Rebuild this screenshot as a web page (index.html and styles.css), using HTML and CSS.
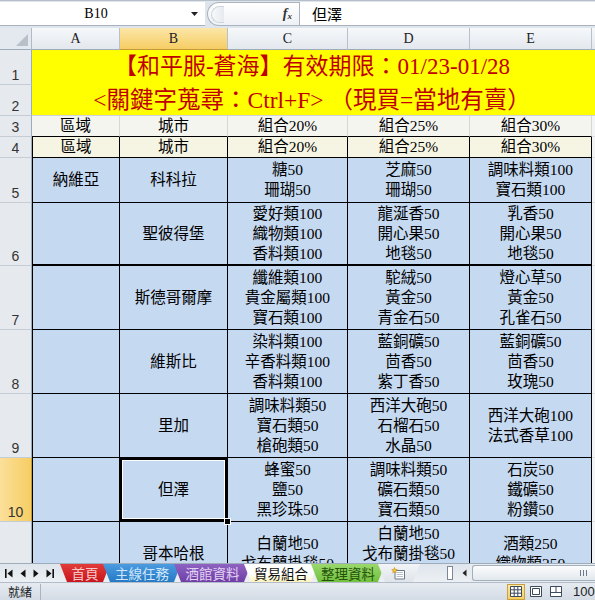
FILE: index.html
```html
<!DOCTYPE html>
<html lang="zh-Hant">
<head>
<meta charset="utf-8">
<title>貿易組合</title>
<link rel="stylesheet" href="styles.css">
</head>
<body>
<div class="app">
  <div class="fbar">
    <div class="namebox"><span class="ref">B10</span><span class="dd"><svg width="7" height="4" viewBox="0 0 7 4"><path d="M0 0H7L3.5 4Z" fill="#222"/></svg></span></div>
    <div class="fxzone"><span class="grip"></span><span class="fx">f<sub>x</sub></span></div>
    <div class="finput">但澤</div>
  </div>

  <div class="sheet">
    <div class="grid">
      <div class="corner"><svg width="12" height="12" viewBox="0 0 12 12"><path d="M12 0V12H0Z" fill="#b9c0c9"/></svg></div>
      <div class="ch">A</div>
      <div class="ch chsel">B</div>
      <div class="ch">C</div>
      <div class="ch">D</div>
      <div class="ch">E</div>
      <div class="ch chfill"></div>

      <div class="rh">1</div>
      <div class="title t1">【和平服-蒼海】有效期限：01/23-01/28</div>
      <div class="rh">2</div>
      <div class="title t2">&lt;關鍵字蒐尋：Ctrl+F&gt; （現買=當地有賣）</div>

      <div class="rh">3</div>
      <div class="h3">區域</div><div class="h3">城市</div><div class="h3">組合20%</div><div class="h3">組合25%</div><div class="h3">組合30%</div><div class="fill"></div>

      <div class="rh">4</div>
      <div class="h4 ca">區域</div><div class="h4">城市</div><div class="h4">組合20%</div><div class="h4">組合25%</div><div class="h4">組合30%</div><div class="fill"></div>

      <div class="rh">5</div>
      <div class="c ca">納維亞</div><div class="c">科科拉</div>
      <div class="c"><span>糖50</span><span>珊瑚50</span></div>
      <div class="c"><span>芝麻50</span><span>珊瑚50</span></div>
      <div class="c"><span>調味料類100</span><span>寶石類100</span></div>
      <div class="fill"></div>

      <div class="rh">6</div>
      <div class="c ca thick"></div><div class="c thick">聖彼得堡</div>
      <div class="c thick"><span>愛好類100</span><span>織物類100</span><span>香料類100</span></div>
      <div class="c thick"><span>龍涎香50</span><span>開心果50</span><span>地毯50</span></div>
      <div class="c thick"><span>乳香50</span><span>開心果50</span><span>地毯50</span></div>
      <div class="fill"></div>

      <div class="rh">7</div>
      <div class="c ca"></div><div class="c">斯德哥爾摩</div>
      <div class="c"><span>纖維類100</span><span>貴金屬類100</span><span>寶石類100</span></div>
      <div class="c"><span>駝絨50</span><span>黃金50</span><span>青金石50</span></div>
      <div class="c"><span>燈心草50</span><span>黃金50</span><span>孔雀石50</span></div>
      <div class="fill"></div>

      <div class="rh">8</div>
      <div class="c ca"></div><div class="c">維斯比</div>
      <div class="c"><span>染料類100</span><span>辛香料類100</span><span>香料類100</span></div>
      <div class="c"><span>藍銅礦50</span><span>茴香50</span><span>紫丁香50</span></div>
      <div class="c"><span>藍銅礦50</span><span>茴香50</span><span>玫瑰50</span></div>
      <div class="fill"></div>

      <div class="rh">9</div>
      <div class="c ca"></div><div class="c">里加</div>
      <div class="c"><span>調味料類50</span><span>寶石類50</span><span>槍砲類50</span></div>
      <div class="c"><span>西洋大砲50</span><span>石榴石50</span><span>水晶50</span></div>
      <div class="c"><span>西洋大砲100</span><span>法式香草100</span></div>
      <div class="fill"></div>

      <div class="rh rhsel">10</div>
      <div class="c ca"></div><div class="c sel">但澤<i class="handle"></i></div>
      <div class="c"><span>蜂蜜50</span><span>鹽50</span><span>黑珍珠50</span></div>
      <div class="c"><span>調味料類50</span><span>礦石類50</span><span>寶石類50</span></div>
      <div class="c"><span>石炭50</span><span>鐵礦50</span><span>粉鑽50</span></div>
      <div class="fill"></div>

      <div class="rh">11</div>
      <div class="c ca"></div><div class="c">哥本哈根</div>
      <div class="c"><span>白蘭地50</span><span>戈布蘭掛毯50</span></div>
      <div class="c up"><span>白蘭地50</span><span>戈布蘭掛毯50</span></div>
      <div class="c"><span>酒類250</span><span>織物類250</span></div>
      <div class="fill"></div>
    </div>
  </div>

  <div class="tabbar">
    <div class="nav">
      <svg width="8" height="9" viewBox="0 0 8 9"><rect x="0" y="0" width="1.6" height="9" fill="#111"/><path d="M7.5 0.5L2.5 4.5L7.5 8.5Z" fill="#111"/></svg>
      <svg width="6" height="9" viewBox="0 0 6 9"><path d="M5.5 0.5L0.5 4.5L5.5 8.5Z" fill="#111"/></svg>
      <svg width="6" height="9" viewBox="0 0 6 9"><path d="M0.5 0.5L5.5 4.5L0.5 8.5Z" fill="#111"/></svg>
      <svg width="8" height="9" viewBox="0 0 8 9"><path d="M0.5 0.5L5.5 4.5L0.5 8.5Z" fill="#111"/><rect x="6.4" y="0" width="1.6" height="9" fill="#111"/></svg>
    </div>
    <div class="tabs">
      <div class="tab red">首頁</div>
      <div class="tab blue">主線任務</div>
      <div class="tab purple">酒館資料</div>
      <div class="tab active">貿易組合</div>
      <div class="tab green">整理資料</div>
      <div class="tab newtab"><svg width="16" height="13" viewBox="0 0 16 13"><path d="M4 3.5H13.5V12H4Z" fill="#fff" stroke="#6b7684"/><path d="M5.5 5.5H12M5.5 7.5H12M5.5 9.5H12" stroke="#b8c2ce"/><path d="M3.5 0.5L4.3 2.4L6.3 2.6L4.8 3.9L5.2 5.8L3.5 4.8L1.8 5.8L2.2 3.9L0.7 2.6L2.7 2.4Z" fill="#f5c33b" stroke="#c99512" stroke-width="0.6"/></svg></div>
    </div>
    <div class="split"></div>
    <div class="hleft"><svg width="5" height="8" viewBox="0 0 5 8"><path d="M4.5 0.5L0.5 4L4.5 7.5Z" fill="#222"/></svg></div>
    <div class="hscroll"><div class="thumb"><span class="gripv"></span></div></div>
  </div>

  <div class="status">
    <span class="ready">就緒</span>
    <span class="sep"></span>
    <span class="grow"></span>
    <span class="vbtn on"><svg width="12" height="11" viewBox="0 0 12 11"><path d="M0.5 0.5H11.5V10.5H0.5ZM0.5 3.8H11.5M0.5 7.2H11.5M4.2 0.5V10.5M7.8 0.5V10.5" fill="#fff" stroke="#3c4a5c"/></svg></span>
    <span class="vbtn"><svg width="12" height="11" viewBox="0 0 12 11"><path d="M0.5 0.5H11.5V10.5H0.5Z" fill="#fff" stroke="#3c4a5c"/><path d="M2.5 2.5H9.5V8.5H2.5Z" fill="none" stroke="#3c4a5c"/></svg></span>
    <span class="vbtn"><svg width="12" height="11" viewBox="0 0 12 11"><path d="M0.5 0.5H11.5V10.5H0.5Z" fill="#fff" stroke="#3c4a5c"/><path d="M0.5 6.5H11.5M6 0.5V6.5" stroke="#3c4a5c"/></svg></span>
    <span class="zoom">100%</span>
  </div>
</div>
</body>
</html>
```

FILE: styles.css
```css
* { box-sizing: border-box; }
html, body { margin: 0; padding: 0; }
body {
  width: 595px;
  height: 600px;
  overflow: hidden;
  background: #fff;
  font-family: "Liberation Serif", "Noto Sans CJK TC", serif;
  color: #000;
}
.app {
  display: flex;
  flex-direction: column;
  width: 595px;
  height: 600px;
}

/* formula bar */
.fbar {
  flex: none;
  height: 28px;
  display: flex;
  align-items: flex-start;
  background: #dfe5ec;
  border-top: 1px solid #b6bfca;
  padding-top: 1px;
}
.namebox {
  width: 205px;
  height: 24px;
  background: #fff;
  border-bottom: 1px solid #a9b3bf;
  display: flex;
  align-items: center;
}
.ref {
  width: 190px;
  text-align: center;
  font-family: "Liberation Serif", serif;
  font-size: 14px;
  padding-left: 2px;
}
.dd { display: flex; align-items: center; margin-left: 1px; }
.fxzone {
  width: 92px;
  height: 24px;
  display: flex;
  align-items: center;
  justify-content: space-between;
  background: linear-gradient(#ffffff, #eef1f5);
  border: 1px solid #a9b3bf;
  border-right: none;
  border-radius: 12px 0 0 12px;
  margin-left: 2px;
  padding: 0 7px 0 3px;
}
.grip {
  width: 13px;
  height: 17px;
  border-radius: 9px 0 0 9px;
  border: 1px solid #cdd4dc;
  border-right: none;
  background: linear-gradient(90deg, #f7f9fb, #e6eaef);
}
.fx {
  font-family: "Liberation Serif", serif;
  font-style: italic;
  font-weight: bold;
  font-size: 14px;
  color: #333;
}
.fx sub { font-size: 9px; vertical-align: -1px; }
.finput {
  flex: 1;
  height: 24px;
  background: #fff;
  border-left: 1px solid #a9b3bf;
  border-bottom: 1px solid #a9b3bf;
  padding-left: 12px;
  font-family: "Noto Sans CJK TC", sans-serif;
  font-size: 15px;
  line-height: 23px;
}

/* sheet */
.sheet {
  flex: 1;
  overflow: hidden;
  background: #fff;
}
.grid {
  display: grid;
  grid-template-columns: 32px 88px 108px 120px 122px 122px 3px;
  grid-template-rows: 22px 35px 31px 21px 21px 45px 63px 64px 64px 64px 64px 64px;
}
.corner {
  background: #e4e9ef;
  border-right: 1px solid #b1bbc6;
  border-bottom: 1px solid #9eabb9;
  display: flex;
  align-items: flex-end;
  justify-content: flex-end;
  padding: 0 3px 3px 0;
}
.ch {
  background: linear-gradient(#f6f8fa, #e3e8ee);
  border-right: 1px solid #b7c1cc;
  border-bottom: 1px solid #9eabb9;
  text-align: center;
  font-family: "Liberation Serif", serif;
  font-size: 14px;
  line-height: 22px;
  color: #222;
}
.chsel {
  background: linear-gradient(#fbe6a8, #f7cd63);
  border-bottom-color: #c29a3a;
}
.chfill { border-right: none; }
.rh {
  grid-column: 1;
  background: #e6eaef;
  border-right: 1px solid #9eabb9;
  border-bottom: 1px solid #c4ccd6;
  display: flex;
  align-items: flex-end;
  justify-content: center;
  font-family: "Liberation Sans", sans-serif;
  font-size: 14px;
  color: #333;
  padding-bottom: 1px;
}
.rhsel {
  background: linear-gradient(90deg, #fbe09a, #f7cd63);
  border-right-color: #c29a3a;
}
.title {
  grid-column: 2 / 8;
  background: #ffff00;
  color: #c00000;
  font-family: "Liberation Serif", "Noto Sans CJK TC", serif;
  display: flex;
  justify-content: center;
  white-space: nowrap;
  padding-right: 3px;
}
.t1 { font-size: 23px; align-items: center; padding-bottom: 1px; line-height: 30px; }
.t2 { font-size: 23.5px; align-items: flex-end; border-bottom: 1px solid #d0d4da; line-height: 30px; }
.fill {
  grid-column: 7;
  background: #f3f4f6;
  border-bottom: 1px solid #dde1e6;
}

.h3, .h4, .c {
  display: flex;
  flex-direction: column;
  align-items: center;
  justify-content: center;
  font-family: "Liberation Serif", "Noto Sans CJK TC", serif;
  font-size: 15.5px;
  line-height: 20px;
  white-space: nowrap;
}
.h3 {
  background: #f5f5f0;
  border-right: 1px solid #d8d8d0;
  border-bottom: 1px solid #000;
}
.h4 {
  background: #f6f5e4;
  border-right: 1px solid #000;
  border-bottom: 1px solid #000;
}
.c {
  background: #c5d9f1;
  border-right: 1px solid #000;
  border-bottom: 1px solid #000;
}
.ca { border-left: 1px solid #000; }
.thick { border-bottom-width: 2px; }
.up { padding-bottom: 20px; }
.sel {
  position: relative;
  box-shadow: inset 0 0 0 2px #000, inset 0 0 0 3px #fff;
  z-index: 2;
}
.handle {
  position: absolute;
  right: -4px;
  bottom: -4px;
  width: 7px;
  height: 7px;
  background: #000;
  border: 1px solid #fff;
}

/* sheet tabs */
.tabbar {
  flex: none;
  height: 19px;
  display: flex;
  align-items: stretch;
  background: linear-gradient(#dfe5ec, #ecf0f4);
  border-top: 1px solid #9eabb9;
}
.nav {
  width: 60px;
  display: flex;
  align-items: center;
  gap: 7px;
  padding-left: 5px;
}
.tabs {
  display: flex;
  align-items: stretch;
  width: 380px;
}
.tab {
  height: 18px;
  margin-left: -7px;
  padding: 0;
  display: flex;
  align-items: center;
  justify-content: center;
  font-family: "Noto Sans CJK TC", sans-serif;
  font-size: 13.5px;
  line-height: 18px;
  clip-path: polygon(0 0, 100% 0, calc(100% - 7px) 100%, 7px 100%);
  white-space: nowrap;
}
.tab:first-child { margin-left: 0; }
.red { width: 50px; background: linear-gradient(#e23a3a, #c8161c); color: #f7c9c9; }
.blue { width: 78px; background: linear-gradient(#4a9be0, #2679c3); color: #cfe6fa; }
.purple { width: 77px; background: linear-gradient(#8e62c2, #6f3fa5); color: #e2d2f3; }
.active { width: 74px; background: linear-gradient(#ffffff 55%, #fdf3bd); color: #111; }
.green { width: 74px; background: linear-gradient(#9ad86c, #72c03e); color: #24520a; }
.newtab { width: 42px; background: linear-gradient(#f2f4f7, #dfe4ea); }
.split {
  width: 6px;
  height: 14px;
  margin: 2px 5px 0 7px;
  background: #fff;
  border: 1px solid #7b8796;
}
.hleft {
  width: 12px;
  display: flex;
  align-items: center;
  justify-content: center;
}
.hscroll {
  flex: 1;
  padding: 1px 0 1px 2px;
  background: #e9edf2;
}
.thumb {
  height: 100%;
  border: 1px solid #a4afbc;
  border-right: none;
  border-radius: 3px 0 0 3px;
  background: linear-gradient(#fbfcfd, #e3e8ee);
  display: flex;
  align-items: center;
  justify-content: flex-end;
  padding-right: 8px;
}
.gripv {
  width: 7px;
  height: 6px;
  background: repeating-linear-gradient(90deg, #6e7a88 0 1px, transparent 1px 3px);
}

/* status bar */
.status {
  flex: none;
  height: 18px;
  display: flex;
  align-items: center;
  background: linear-gradient(#e6ebf1, #d3dbe5);
  border-top: 1px solid #b3bdc9;
  font-family: "Noto Sans CJK TC", sans-serif;
  font-size: 12px;
  color: #222;
}
.ready { padding-left: 8px; width: 40px; }
.sep { width: 1px; height: 16px; background: #a9b4c1; }
.grow { flex: 1; }
.vbtn {
  width: 18px;
  height: 16px;
  display: flex;
  align-items: center;
  justify-content: center;
  margin-right: 2px;
}
.vbtn.on {
  background: linear-gradient(#fde9a6, #f8cf5f);
  border: 1px solid #c9a13e;
}
.zoom {
  font-family: "Liberation Sans", sans-serif;
  font-size: 13px;
  padding-left: 6px;
  white-space: nowrap;
  width: 28px;
  overflow: hidden;
}
```
